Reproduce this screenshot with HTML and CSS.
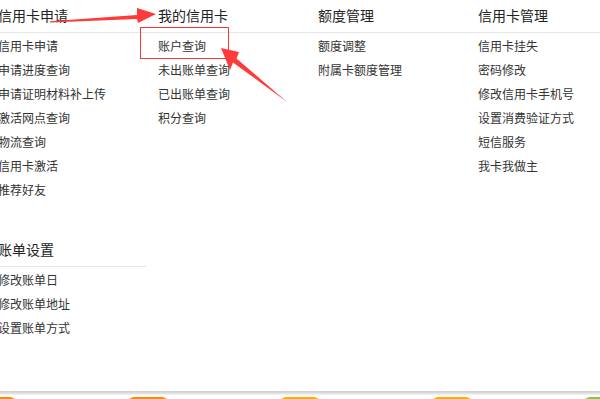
FILE: index.html
```html
<!DOCTYPE html>
<html lang="zh-CN">
<head>
  <meta charset="UTF-8" />
  <meta name="viewport" content="width=device-width, initial-scale=1" />
  <title>信用卡服务</title>
  <link rel="stylesheet" href="styles.css">
</head>
<body>
  <div class="page">
    <div class="menu">
      <div class="group">
        <h3>信用卡申请</h3>
        <ul>
          <li>信用卡申请</li>
          <li>申请进度查询</li>
          <li>申请证明材料补上传</li>
          <li>激活网点查询</li>
          <li>物流查询</li>
          <li>信用卡激活</li>
          <li>推荐好友</li>
        </ul>
      </div>
      <div class="group">
        <h3>我的信用卡</h3>
        <ul>
          <li>账户查询</li>
          <li>未出账单查询</li>
          <li>已出账单查询</li>
          <li>积分查询</li>
        </ul>
      </div>
      <div class="group">
        <h3>额度管理</h3>
        <ul>
          <li>额度调整</li>
          <li>附属卡额度管理</li>
        </ul>
      </div>
      <div class="group">
        <h3>信用卡管理</h3>
        <ul>
          <li>信用卡挂失</li>
          <li>密码修改</li>
          <li>修改信用卡手机号</li>
          <li>设置消费验证方式</li>
          <li>短信服务</li>
          <li>我卡我做主</li>
        </ul>
      </div>
    </div>

    <div class="menu menu-bill">
      <div class="group">
        <h3>账单设置</h3>
        <ul>
          <li>修改账单日</li>
          <li>修改账单地址</li>
          <li>设置账单方式</li>
        </ul>
      </div>
    </div>
  </div>

  <div class="dock">
    <span class="icon orange"></span>
    <span class="icon orange"></span>
    <span class="icon amber"></span>
    <span class="icon amber"></span>
    <span class="icon green"></span>
  </div>

  <!-- annotation marks drawn over the menu -->
  <svg class="marks" width="600" height="399" viewBox="0 0 600 399">
    <polygon fill="#ff3a3a" points="50,21.2 137,15 137,8 156,14 138,23 137,19 50,22.4" />
    <rect x="140.5" y="27.5" width="88" height="31" fill="none" stroke="#f03a3a" stroke-width="1" />
    <polygon fill="#ff3a3a" points="221,48 239,52 236.5,58.5 287,102 233,62.5 230,70" />
  </svg>
</body>
</html>
```

FILE: styles.css
```css
body {
  margin: 0;
  width: 600px;
  height: 399px;
  overflow: hidden;
  position: relative;
  background: #fff;
  font-family: "Noto Sans CJK SC", "Noto Sans", sans-serif;
  color: #333;
}
.page {
  height: 391px;
  overflow: hidden;
}
.menu {
  display: flex;
  margin-left: -2px;
}
.group {
  width: 160px;
  flex: none;
}
.group h3 {
  margin: 0;
  height: 32px;
  line-height: 30px;
  font-size: 14px;
  font-weight: normal;
  color: #222;
  border-bottom: 1px solid #e6e6e6;
}
.group ul {
  list-style: none;
  margin: 0;
  padding: 1px 0 0;
}
.group li {
  font-size: 12px;
  line-height: 24px;
  height: 24px;
  white-space: nowrap;
}
.menu-bill {
  margin-top: 32px;
}
.menu-bill .group {
  width: 148px;
}
.dock {
  height: 8px;
  display: flex;
  gap: 112px;
  background: linear-gradient(#cfcfcf, #dcdcdc 2px, #ececec 3px, #f7f7f7 4px, #fff 5px);
  overflow: hidden;
}
.icon {
  flex: none;
  width: 40px;
  height: 40px;
  margin-top: 6px;
  border-radius: 6px;
}
.icon:first-child {
  margin-left: -24px;
}
.orange {
  background: #ff8a00;
}
.amber {
  background: #ffab00;
}
.green {
  background: #8cc63f;
}
.marks {
  position: absolute;
  left: 0;
  top: 0;
  pointer-events: none;
}
```
